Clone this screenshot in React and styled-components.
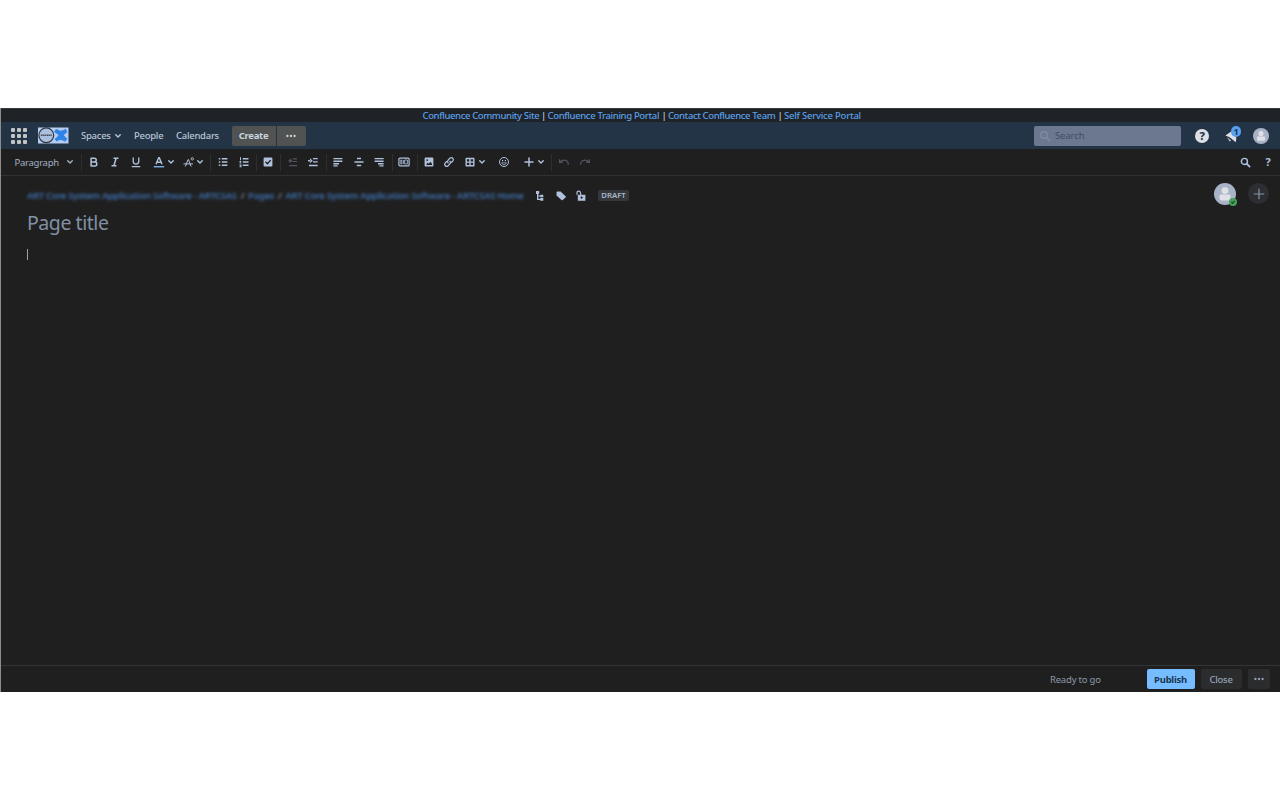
import React from 'react'
import styled, { createGlobalStyle } from 'styled-components'

const stroke = { fill: 'none', stroke: 'currentColor', strokeWidth: 1.4 }

function Icon({ size = 12, children, ...rest }) {
    return <svg width={size} height={size} viewBox="0 0 12 12" fill="currentColor" {...rest}>{children}</svg>
}

const Chevron = () => (
    <Icon size={8}><path d="M2.6 4.2L6 7.6l3.4-3.4" {...stroke} strokeWidth="2.1" strokeLinecap="round" strokeLinejoin="round" /></Icon>
)

const Dots = () => (
    <Icon size={10}><circle cx="1.7" cy="6" r="1.4" /><circle cx="6" cy="6" r="1.4" /><circle cx="10.3" cy="6" r="1.4" /></Icon>
)

const Person = ({ size }) => (
    <Icon size={size} viewBox="0 0 24 24">
        <circle cx="12" cy="12" r="12" fill="#a9b3c8" />
        <circle cx="12" cy="8.3" r="3.8" fill="#dfe1e6" />
        <path d="M6 13.8q0-1.2 1.3-1.2h9.4q1.3 0 1.3 1.2V17q0 2-2 2H8q-2 0-2-2z" fill="#dfe1e6" />
    </Icon>
)

const icons = {
    chevron: <Chevron />,
    bold: <Icon><path d="M3.1 2.2h3.3a1.8 1.8 0 010 3.7H3.1zM3.1 5.9h3.7a2 2 0 010 4H3.1z" {...stroke} strokeWidth="1.5" strokeLinejoin="round" /></Icon>,
    italic: <Icon><path d="M4.5 2.2h5M2.5 9.8h5M7.1 2.2L4.9 9.8" {...stroke} strokeWidth="1.5" /></Icon>,
    underline: <Icon><path d="M3.2 1.5v3.8a2.8 2.8 0 005.6 0V1.5M1.8 10.6h8.4" {...stroke} strokeWidth="1.3" /></Icon>,
    color: <Icon><path d="M3 8.3L5.7 1.8h.6L9 8.3M4 6.2h4" {...stroke} /><path d="M.8 10.1h10.4v1.3H.8z" fill="#85b8ff" /></Icon>,
    format: <Icon><path d="M2.4 10.5L5 3.6h.5l2.6 6.9M.5 7.9h9.5" {...stroke} strokeWidth="1" /><circle cx="9.3" cy="2.8" r="1.2" {...stroke} strokeWidth=".9" /></Icon>,
    bullets: <Icon><path d="M1.8 2h1.5v1.5H1.8zM1.8 5.3h1.5v1.5H1.8zM1.8 8.6h1.5v1.5H1.8zM4.8 2h5.6v1.4H4.8zM4.8 5.3h5.6v1.4H4.8zM4.8 8.6h5.6V10H4.8z" /></Icon>,
    numbers: <Icon><path d="M2 1.2h1v3H2zM1.5 5h1.8v1.1l-.8.8h.8v.7H1.5v-.8L2.3 6h-.8zM1.5 8.5h2v2.7h-2v-.7h1v-.3h-.8v-.7h.8v-.3h-1zM4.8 2h5.7v1.4H4.8zM4.8 5.3h5.7v1.4H4.8zM4.8 8.6h5.7V10H4.8z" /></Icon>,
    check: <Icon><rect x="1.6" y="1.6" width="8.8" height="8.8" rx="1.2" /><path d="M3.5 5.8l1.9 1.9 3.3-3.6" {...stroke} stroke="#1f1f1f" /></Icon>,
    outdent: <Icon><path d="M5.6 2.2H10v1.2H5.6zM5.6 4.9H10v1.2H5.6zM2.2 9.1H10v1.2H2.2zM4 2.4v4.8L1.2 4.8zM3.5 4.2h2v1.2h-2z" /></Icon>,
    indent: <Icon><path d="M6 2h4.7v1.3H6zM6 5.2h4.7v1.4H6zM2 8.8h8.7v1.4H2zM3 2.3v5l2.8-2.5zM1 4.1h2.5v1.4H1z" /></Icon>,
    left: <Icon><path d="M1.4 2h9v1.3h-9zM1.4 4.6h9v1.3h-9zM1.4 7.1H7v1.3H1.4zM1.4 9.3h4.2v1.2H1.4z" /></Icon>,
    center: <Icon><path d="M4 1.8h4v1.4H4zM1.5 5.3h9v1.5h-9zM3.8 8.8h4.4v1.4H3.8z" /></Icon>,
    right: <Icon><path d="M1.6 2h9v1.3h-9zM1.6 4.6h9v1.3h-9zM5 7.1h5.6v1.3H5zM6.4 9.3h4.2v1.2H6.4z" /></Icon>,
    layout: <Icon><rect x=".9" y="2.1" width="10.2" height="7.8" rx="1" {...stroke} strokeWidth="1.2" /><path d="M2.8 4v4h1V4zM5.4 4v4M6.6 4h2.8v4H6.6z" {...stroke} strokeWidth=".8" /></Icon>,
    image: <Icon><rect x="1.6" y="1.6" width="8.8" height="8.8" rx="1.2" /><path d="M3 8.9l1.8-2.3 1.1 1.1 1.7-1.9L9 7.9v1z" fill="#1f1f1f" /><circle cx="4.2" cy="4.1" r=".9" fill="#1f1f1f" /></Icon>,
    link: <Icon><g {...stroke} strokeWidth="1.3" strokeLinecap="round"><path d="M5.1 6.9a2 2 0 010-2.8l2-2a2 2 0 012.8 2.8L8.6 6.2" /><path d="M6.9 5.1a2 2 0 010 2.8l-2 2a2 2 0 01-2.8-2.8l1.3-1.3" /></g></Icon>,
    table: <Icon><path d="M2.2 2.5h7.6v7.2H2.2zM6 2.5v7.2M2.2 6.1h7.6" {...stroke} strokeLinejoin="round" /></Icon>,
    emoji: <Icon><circle cx="6" cy="6" r="4.5" {...stroke} strokeWidth="1" /><path d="M4 4.1h1.2v1.2H4zM6.8 4.1H8v1.2H6.8z" /><path d="M3.6 6.8h4.8Q7.8 8.7 6 8.7T3.6 6.8z" {...stroke} strokeWidth=".7" /></Icon>,
    plus: <Icon><path d="M6 2v8M2 6h8" {...stroke} strokeWidth="1.5" strokeLinecap="round" /></Icon>,
    undo: <Icon><path d="M1.6 3.2v3.1h3.1M2 5.9q3.3-3 6.6-1.1 2 1.3 1.7 4" {...stroke} strokeWidth="1.2" /></Icon>,
    redo: <Icon><path d="M10.4 3.2v3.1H7.3M10 5.9Q6.7 2.9 3.4 4.8q-2 1.3-1.7 4" {...stroke} strokeWidth="1.2" /></Icon>,
}

// name, space before, width; 'sep' is a one pixel divider
const tools = [
    ['sep', 0], ['bold', 2, 20], ['italic', 0.5, 20], ['underline', 1, 20],
    ['color', 6.5, 14], ['chevron', 1, 8], ['format', 6.5, 14], ['chevron', 0, 8],
    ['sep', 6.5], ['bullets', 2, 20], ['numbers', 1, 20],
    ['sep', 2], ['check', 1, 20],
    ['sep', 2], ['outdent', 2, 20, true], ['indent', 0.4, 20],
    ['sep', 2.5], ['left', 1, 20], ['center', 1, 20], ['right', 0.5, 20],
    ['sep', 2.6], ['layout', 1, 20],
    ['sep', 3], ['image', 1, 20], ['link', 0.5, 20], ['table', 3.5, 14], ['chevron', 1, 8],
    ['emoji', 8, 20], ['plus', 8, 14], ['chevron', 1, 8],
    ['sep', 6.5], ['undo', 1.5, 20, true], ['redo', 1, 20, true],
]

export default function App() {
    return (
        <Page>
            <Global />
            <Frame>
                <Banner>
                    <BannerLink $w={117}>Confluence Community Site</BannerLink>|
                    <BannerLink $w={112.5} $track={-0.34}>Confluence Training Portal</BannerLink>|
                    <BannerLink $w={108}>Contact Confluence Team</BannerLink>|
                    <BannerLink $w={78} $track={-0.22}>Self Service Portal</BannerLink>
                </Banner>
                <Header>
                    <Grid>{Array.from({ length: 9 }, (_, i) => <i key={i} />)}</Grid>
                    <Logo />
                    <NavItem $w={40.5}>Spaces <Chevron /></NavItem>
                    <NavItem $w={29.5}>People</NavItem>
                    <NavItem $w={42.5}>Calendars</NavItem>
                    <Create><span>Create</span><span><Dots /></span></Create>
                    <Search>
                        <Icon size={12}><circle cx="5" cy="5" r="3.2" {...stroke} /><path d="M7.5 7.5L11 11" {...stroke} strokeWidth="1.7" /></Icon>
                        Search
                    </Search>
                    <HelpBadge>?</HelpBadge>
                    <Notices>
                        <svg width="14" height="14" viewBox="0 0 14 14" fill="#dce0e5">
                            <path d="M.4 6.4L8.4 1l3 8.3-.7 4-4.2-3.5L4 8z" />
                            <path d="M2 8.3l4 3.3-1.2 1z" />
                        </svg>
                        <b>1</b>
                    </Notices>
                    <Person size={16} />
                </Header>
                <Toolbar>
                    <Style>Paragraph <Chevron /></Style>
                    {tools.map(([name, gap, width, off], i) => name === 'sep'
                        ? <Separator key={i} $gap={gap} />
                        : <Tool key={i} $gap={gap} $w={width} $off={off}>{icons[name]}</Tool>)}
                    <Spacer />
                    <Find><circle cx="4.8" cy="4.8" r="3.3" {...stroke} strokeWidth="1.6" /><path d="M7 7l4 4" {...stroke} strokeWidth="1.9" /></Find>
                    <Question>?</Question>
                </Toolbar>
                <Editor>
                    <Meta>
                        <Crumbs>
                            <a>ART Core System Application Software - ARTCSAS</a><em>/</em>
                            <a>Pages</a><em>/</em>
                            <a>ART Core System Application Software - ARTCSAS Home</a>
                        </Crumbs>
                        <MetaIcons>
                            <Icon><path d="M2 1h3.2v3H2zM3 4h1.3v5.2H3zM3 5.4h3.5v1.2H3zM6.3 4.7h3v2.5h-3zM3 8.8h3.5V10H3zM6.3 8h3v2.7h-3z" /></Icon>
                            <Icon><path d="M1.5 2.6q0-1 1-1h3.1l5 4.6q.6.6 0 1.2L7.7 10q-.6.6-1.2 0l-5-4.5z" /></Icon>
                            <Icon><path d="M2 4.7V2.6q0-1.5 1.7-1.5 1.6 0 1.8 1.6l.2 2" {...stroke} strokeWidth="1.2" /><path fillRule="evenodd" d="M2.8 4.7h7.6v6H2.8zM6.6 6.5a1.1 1.1 0 100 2.2 1.1 1.1 0 000-2.2" /></Icon>
                        </MetaIcons>
                        <Draft>DRAFT</Draft>
                        <Spacer />
                        <Presence>
                            <Person size={22} />
                            <Icon size={8}><circle cx="6" cy="6" r="6" fill="#43a35a" /><path d="M3.4 6l1.9 1.9 3.3-3.6" {...stroke} stroke="#1c4a2a" strokeWidth="1.8" /></Icon>
                        </Presence>
                        <Invite><Icon size={14}><path d="M6 1.5v9M1.5 6h9" {...stroke} strokeWidth="1" /></Icon></Invite>
                    </Meta>
                    <Title>Page title</Title>
                    <Caret />
                </Editor>
                <Footer>
                    <Status>Ready to go</Status>
                    <Button $primary $w={48}>Publish</Button>
                    <Button $w={41}>Close</Button>
                    <Button $w={22}><Dots /></Button>
                </Footer>
            </Frame>
        </Page>
    )
}

function Logo() {
    return (
        <LogoSvg width="31" height="17" viewBox="0 0 31 17">
            <path d="M0 .5h30.5v16H0z" fill="#b5cdf0" />
            <circle cx="8.3" cy="8.3" r="7.4" fill="#aabfde" stroke="#30353f" strokeWidth="1.2" />
            <path d="M2.8 8.3h11" stroke="#4a505b" strokeWidth="1.4" strokeDasharray="1.6 .4" />
            <path d="M17 3l2-.9q3.5 3.3 8.6-.4l1.8 3.2q-2.7 2-3.6 3.4 1.4 2 3.6 3.4l-2.2 3q-4.5-3.2-8.4-.3l-2.3-2.5q2.8-1.5 4-3.7-1.8-1.8-4.2-2.9z" fill="#2f82e8" />
        </LogoSvg>
    )
}

const Global = createGlobalStyle`
  * { box-sizing: border-box; }
  body { margin: 0; background: #fff; }
`

const Page = styled.div`
  height: 800px;
  padding-top: 108px;
  font-family: "Noto Sans", "Open Sans", sans-serif;
  font-size: 9.5px;
  letter-spacing: -0.27px;
  color: #a3b1c2;
  svg { display: block; flex: none; }
`

const Frame = styled.div`
  height: 584px;
  display: flex;
  flex-direction: column;
  background: #1f1f1f;
  border-left: 1px solid #8c8c8c;
`

const Banner = styled.div`
  height: 14px;
  flex: none;
  display: flex;
  align-items: center;
  padding-left: 421.5px;
  background: #1f2327;
  border-top: 1px solid #363a3a;
  color: #c7d1db;
  font-weight: 500;
  gap: 1.5px;
`

const BannerLink = styled.a`
  width: ${p => p.$w}px;
  flex: none;
  white-space: nowrap;
  letter-spacing: ${p => p.$track || -0.37}px;
  color: #5a9fe8;
`

const Header = styled.div`
  height: 27px;
  flex: none;
  display: flex;
  align-items: center;
  padding: 0 11px 0 10px;
  background: #243447;
`

const Grid = styled.div`
  display: grid;
  grid-template-columns: repeat(3, 4px);
  gap: 2px;
  i { height: 4px; background: #c1c3c5; border-radius: 1px; }
`

const LogoSvg = styled.svg`
  margin: 0 12px 0 11px;
`

const NavItem = styled.span`
  display: flex;
  align-items: center;
  justify-content: space-between;
  width: ${p => p.$w}px;
  margin-right: 12.5px;
  white-space: nowrap;
  font-weight: 500;
  color: #b9c5d3;
`

const Create = styled.div`
  display: flex;
  height: 20px;
  margin-left: 0.5px;
  color: #c9d3de;
  font-weight: 700;
  span {
    display: flex;
    align-items: center;
    justify-content: center;
    width: 44px;
    background: #505352;
    border-radius: 2px 0 0 2px;
  }
  span + span {
    width: 29.5px;
    margin-left: 1px;
    border-radius: 0 2px 2px 0;
  }
`

const Search = styled.div`
  display: flex;
  align-items: center;
  gap: 4px;
  width: 147px;
  height: 20px;
  margin-left: auto;
  padding-left: 5px;
  border-radius: 2px;
  background: #6b7890;
  color: #414d60;
  letter-spacing: -0.1px;
  svg { color: #818b9c; }
`

const HelpBadge = styled.span`
  width: 14px;
  height: 14px;
  margin: 0 16px 0 14px;
  border-radius: 50%;
  background: #dce0e5;
  color: #243447;
  font-size: 11px;
  font-weight: 800;
  line-height: 14px;
  text-align: center;
`

const Notices = styled.span`
  position: relative;
  width: 16px;
  height: 14px;
  margin-right: 12px;
  b {
    position: absolute;
    left: 6px;
    top: -3px;
    width: 10px;
    height: 11px;
    border-radius: 5px;
    background: #579ff0;
    color: #17304f;
    font-size: 8.5px;
    line-height: 11px;
    text-align: center;
  }
`

const Toolbar = styled.div`
  height: 27px;
  flex: none;
  display: flex;
  align-items: center;
  padding-right: 8px;
  border-bottom: 1px solid #303133;
  color: #b0c1de;
`

const Style = styled.span`
  display: flex;
  align-items: center;
  justify-content: space-between;
  width: 80px;
  padding: 0 7px 0 13.5px;
  color: #a3b1c2;
`

const Tool = styled.span`
  display: flex;
  flex: none;
  justify-content: center;
  width: ${p => p.$w}px;
  margin-left: ${p => p.$gap}px;
  color: ${p => p.$off ? '#51565e' : '#b0c1de'};
`

const Separator = styled.i`
  flex: none;
  width: 1px;
  height: 17px;
  margin-left: ${p => p.$gap}px;
  background: #2d3033;
`

const Spacer = styled.span`
  flex: 1;
`

const Find = styled.svg.attrs({ viewBox: '0 0 12 12' })`
  width: 11px;
  height: 11px;
  margin-right: 13px;
`

const Question = styled.b`
  width: 8px;
  font-size: 11px;
  line-height: 14px;
  margin-top: -1px;
  text-align: center;
`

const Editor = styled.div`
  flex: 1;
  padding: 5px 11px 0 26px;
`

const Meta = styled.div`
  display: flex;
  align-items: center;
  height: 26px;
`

const Crumbs = styled.div`
  display: flex;
  width: 496px;
  padding-top: 3px;
  white-space: nowrap;
  filter: blur(1.4px);
  font-weight: 600;
  letter-spacing: -0.34px;
  color: #3f71b0;
  em { margin: 0 4px; color: #8a949f; font-style: normal; }
`

const MetaIcons = styled.div`
  display: flex;
  gap: 8.5px;
  width: 75px;
  padding: 4px 0 0 11px;
  color: #b0c1de;
`

const Draft = styled.span`
  height: 11px;
  width: 31px;
  margin-top: 2px;
  border-radius: 2px;
  background: #34373b;
  color: #a9b7c9;
  font-size: 7.8px;
  font-weight: 600;
  letter-spacing: 0;
  line-height: 11px;
  text-align: center;
`

const Presence = styled.span`
  position: relative;
  margin: -1px 12px 0 0;
  svg + svg {
    position: absolute;
    right: -1px;
    bottom: -1px;
  }
`

const Invite = styled.span`
  display: grid;
  place-items: center;
  width: 21px;
  height: 21px;
  margin-top: -1px;
  border-radius: 50%;
  background: #2c2e31;
  color: #8797a8;
`

const Title = styled.div`
  height: 32px;
  line-height: 31px;
  font-size: 19.5px;
  letter-spacing: -0.45px;
  color: #8190a5;
`

const Caret = styled.i`
  display: block;
  width: 1px;
  height: 11px;
  margin-top: 10px;
  background: #96a3b2;
`

const Footer = styled.div`
  height: 27px;
  flex: none;
  display: flex;
  align-items: center;
  justify-content: flex-end;
  gap: 6px;
  padding-right: 10.5px;
  border-top: 1px solid #333436;
`

const Status = styled.span`
  width: 90.5px;
  letter-spacing: -0.2px;
  color: #8c9bab;
`

const Button = styled.span`
  display: flex;
  align-items: center;
  justify-content: center;
  width: ${p => p.$w}px;
  height: 20px;
  border-radius: 2px;
  background: ${p => p.$primary ? '#75bdff' : '#2b2c2e'};
  color: ${p => p.$primary ? '#1c3550' : '#96a3b3'};
  font-weight: ${p => p.$primary ? 700 : 500};
`
